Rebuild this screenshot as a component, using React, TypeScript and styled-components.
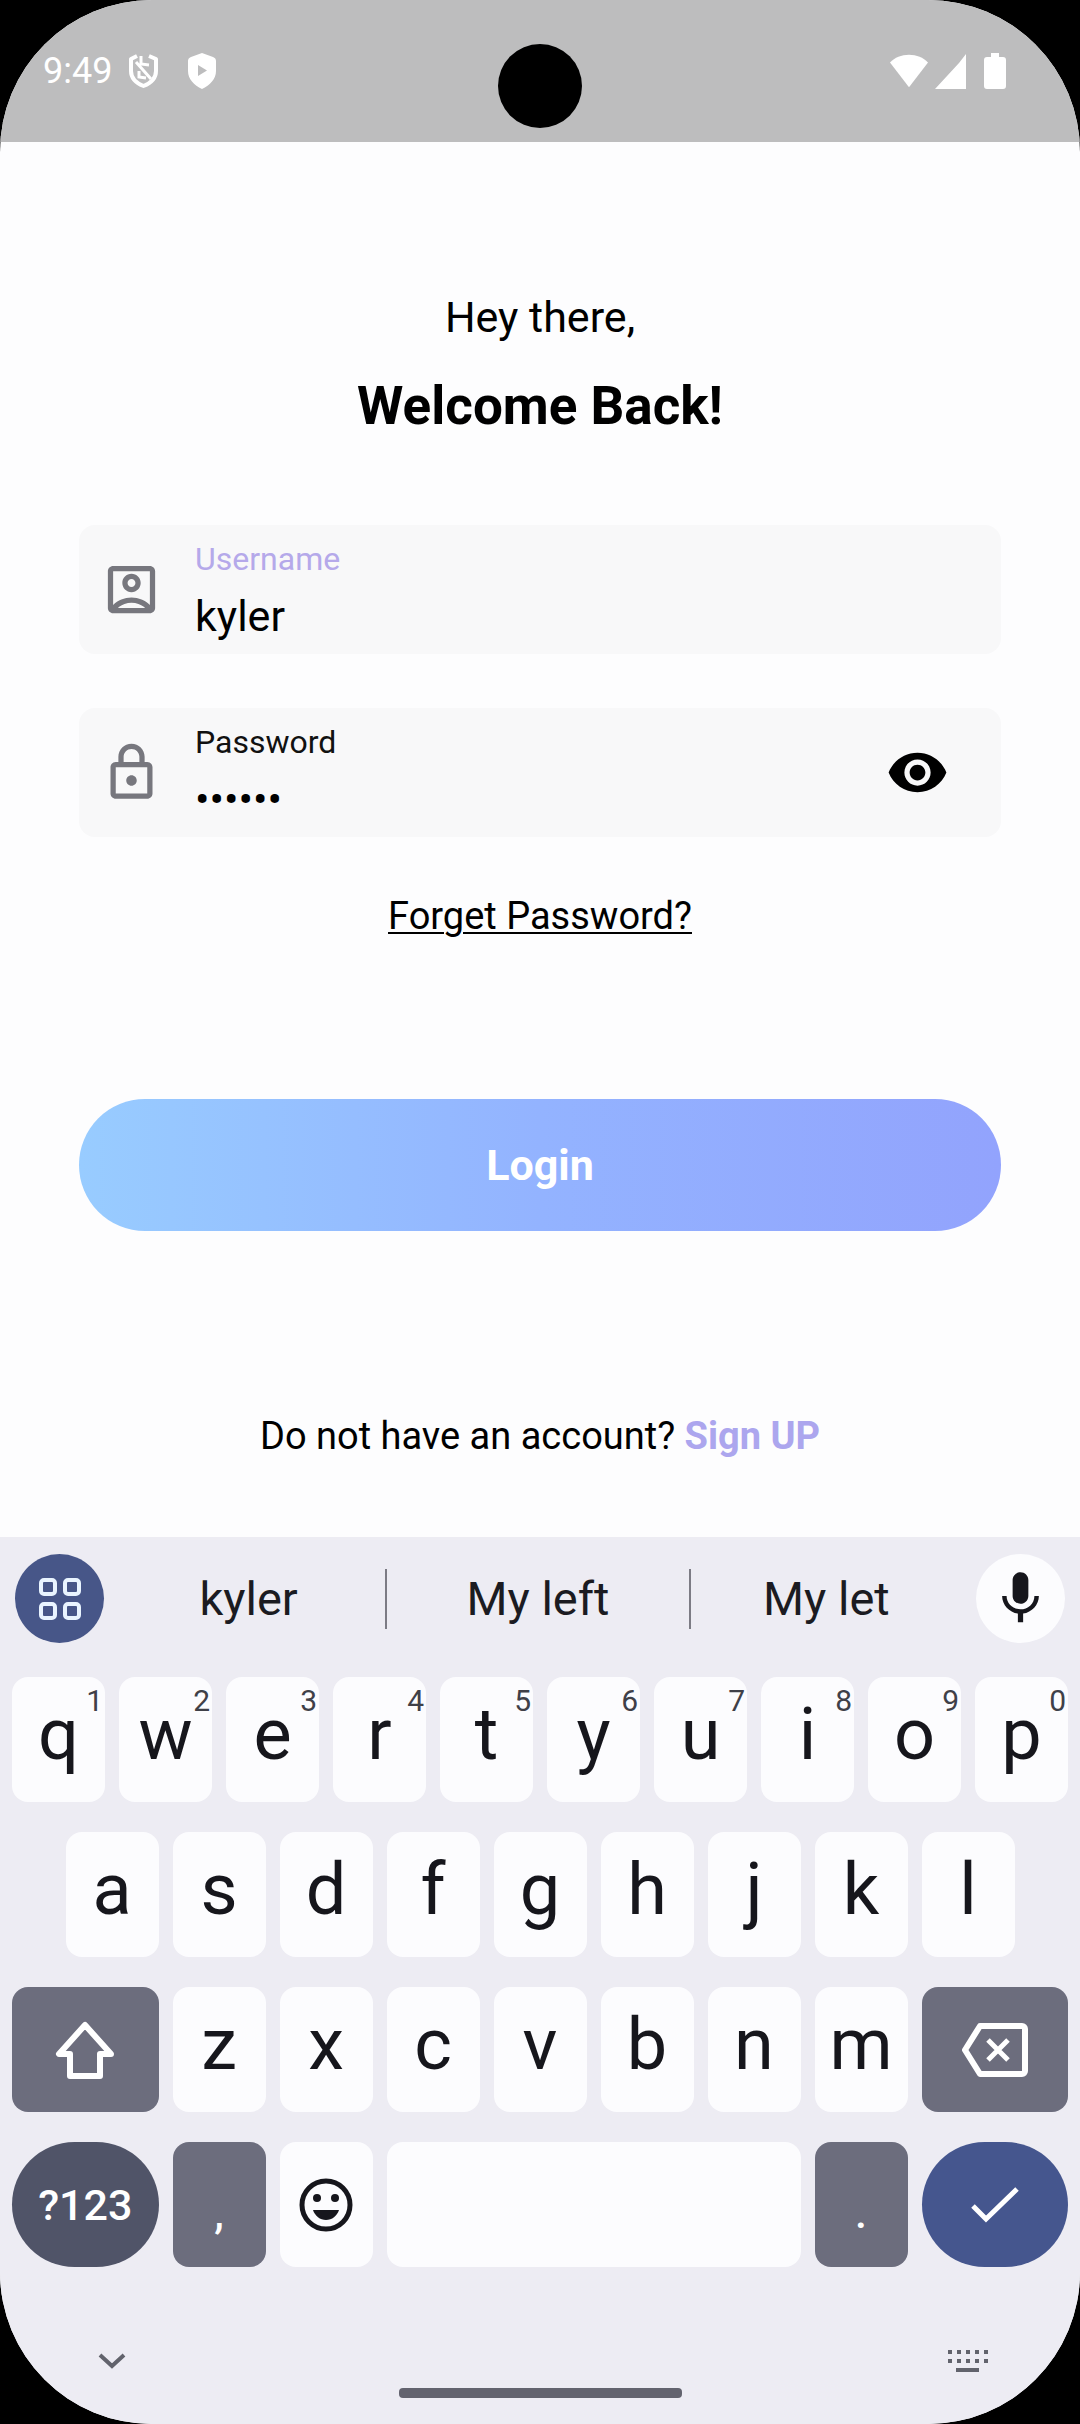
import React, { useState } from "react";
import styled, { createGlobalStyle, css } from "styled-components";
import { MdMic, MdOutlineAccountBox, MdOutlineLock, MdVisibility } from "react-icons/md";

const GlobalStyle = createGlobalStyle`
  *, *::before, *::after { box-sizing: border-box; }
  body {
    margin: 0;
    background: #000;
    font-family: Roboto, "Liberation Sans", sans-serif;
  }
  button, input { font-family: inherit; }
  button { border: 0; padding: 0; cursor: pointer; }
  svg { display: block; flex: none; }
`;

const Screen = styled.div`
  position: relative;
  display: flex;
  flex-direction: column;
  min-height: 100vh;
  border-radius: 152px;
  overflow: hidden;
  background: #fdfdfe;
  color: #000;
`;

const StatusBar = styled.header`
  display: flex;
  align-items: center;
  justify-content: space-between;
  height: 142px;
  padding: 0 74px 0 43px;
  background: #bdbdbe;
  color: #fff;
`;

const StatusGroup = styled.div<{ $gap: number }>`
  display: flex;
  align-items: center;
  gap: ${(p) => p.$gap}px;
`;

const Clock = styled.time`
  font-size: 36px;
  line-height: 44px;
  margin-right: -12px;
`;

const Camera = styled.div`
  position: absolute;
  top: 44px;
  left: 50%;
  width: 84px;
  height: 84px;
  margin-left: -42px;
  border-radius: 50%;
  background: #000;
`;

const Main = styled.main`
  display: flex;
  flex-direction: column;
  align-items: center;
  padding: 150px 79px 79px;
`;

const Greeting = styled.p`
  margin: 0 0 32px;
  font-size: 43px;
  line-height: 50px;
`;

const Title = styled.h1`
  margin: 0;
  font-size: 53px;
  line-height: 64px;
  font-weight: 700;
`;

const Form = styled.form`
  display: flex;
  flex-direction: column;
  align-items: center;
  align-self: stretch;
  margin-top: 87px;
`;

const Fields = styled.div`
  display: flex;
  flex-direction: column;
  align-self: stretch;
  gap: 54px;
`;

const Field = styled.div`
  display: flex;
  align-items: center;
  gap: 32px;
  height: 129px;
  padding: 0 52px 0 21px;
  border-radius: 16px;
  background: #f8f8f9;
  color: #77777e;
`;

const FieldText = styled.div`
  display: flex;
  flex: 1;
  flex-direction: column;
  gap: 14px;
  min-width: 0;
  padding-top: 2px;
`;

const Label = styled.label<{ $active?: boolean }>`
  font-size: 32px;
  line-height: 36px;
  color: ${(p) => (p.$active ? "#b5a9ea" : "#111")};
`;

const Input = styled.input`
  width: 100%;
  height: 50px;
  padding: 0;
  border: 0;
  outline: 0;
  background: transparent;
  font-size: 43px;
  line-height: 50px;
  color: #000;
`;

const EyeButton = styled.button`
  background: transparent;
  color: #000;
`;

const ForgotLink = styled.a`
  margin: 57px 0 161px;
  font-size: 38px;
  line-height: 44px;
  color: #000;
  text-decoration: underline;
  text-decoration-thickness: 2px;
  text-underline-offset: 3px;
`;

const LoginButton = styled.button`
  align-self: stretch;
  height: 132px;
  border-radius: 66px;
  background: linear-gradient(90deg, #98ccff, #93b3ff 50%, #92a3fd);
  color: #fff;
  font-size: 43px;
  line-height: 50px;
  font-weight: 700;
`;

const SignUp = styled.p`
  margin: 183px 0 0;
  font-size: 38px;
  line-height: 44px;
`;

const SignUpLink = styled.a`
  font-weight: 700;
  color: #aca6ee;
  text-decoration: none;
`;

const Keyboard = styled.section`
  margin-top: auto;
  padding: 17px 12px 26px;
  background: #edecf3;
`;

const Strip = styled.div`
  display: flex;
  align-items: center;
  gap: 8px;
  padding: 0 3px;
  margin-bottom: 34px;
`;

const RoundButton = styled.button<{ $dark?: boolean }>`
  display: flex;
  flex: none;
  align-items: center;
  justify-content: center;
  width: 89px;
  height: 89px;
  border-radius: 50%;
  background: ${(p) => (p.$dark ? "#475688" : "#fcfcfe")};
  color: ${(p) => (p.$dark ? "#e9f4ff" : "#16161c")};
`;

const Suggestions = styled.div`
  display: grid;
  flex: 1;
  grid-template-columns: 9fr 10fr 9fr;
  padding-right: 6px;
`;

const Suggestion = styled.button`
  height: 60px;
  background: transparent;
  color: #1b1b21;
  font-size: 47px;
  line-height: 60px;

  & + & { border-left: 2px solid #7c7b84; }
`;

const Keys = styled.div`
  display: grid;
  grid-template-columns: repeat(20, minmax(0, 1fr));
  grid-auto-rows: 125px;
  gap: 30px 14px;
`;

type Tone = "light" | "grey" | "slate" | "blue";

const tones: Record<Tone, string> = {
  light: "#fcfcfe",
  grey: "#6c6d7d",
  slate: "#505468",
  blue: "#45568e",
};

const Key = styled.button<{ $span?: number; $start?: number; $tone?: Tone; $pill?: boolean }>`
  position: relative;
  display: flex;
  align-items: center;
  justify-content: center;
  grid-column: ${(p) => p.$start ?? "auto"} / span ${(p) => p.$span ?? 2};
  border-radius: ${(p) => (p.$pill ? 63 : 16)}px;
  background: ${(p) => tones[p.$tone ?? "light"]};
  color: ${(p) => (p.$tone && p.$tone !== "light" ? "#fff" : "#16161c")};
`;

const LetterKey = styled(Key)`
  padding-bottom: 10px;
  font-size: 72px;
  line-height: 84px;
`;

const Hint = styled.span`
  position: absolute;
  top: 6px;
  right: 2px;
  font-size: 30px;
  line-height: 36px;
  color: #3f4048;
`;

const SymbolKey = styled(Key)<{ $low?: boolean }>`
  font-size: 43px;
  line-height: 52px;
  font-weight: 500;
  ${(p) => p.$low && css`padding-top: 16px;`}
`;

const NavRow = styled.div`
  display: flex;
  justify-content: space-between;
  height: 62px;
  margin-top: 69px;
  padding: 0 75px;
`;

const NavButton = styled.button`
  display: flex;
  align-items: center;
  justify-content: center;
  width: 50px;
  height: 50px;
  background: transparent;
  color: #62636c;
`;

const HomeBar = styled.div`
  align-self: flex-end;
  width: 283px;
  height: 10px;
  border-radius: 4px;
  background: #63636e;
`;

const ShieldOffIcon = () => (
  <svg width="31" height="36" viewBox="0 0 31 36" fill="none" stroke="currentColor" strokeWidth="4">
    <path d="M9 3 3 6v12c0 7 5 12 12.500 15C23 30 28 25 28 18V6l-7-3" strokeLinejoin="round" />
    <path d="m8 9 15 17M13 3v8l8 1M11 18v6l7 1" strokeWidth="3" />
  </svg>
);

const ShieldPlayIcon = () => (
  <svg width="30" height="36" viewBox="0 0 30 36">
    <path
      fill="currentColor"
      fillRule="evenodd"
      d="M15 0 4 4Q1 5 1 8v10c0 8 6 14 14 18 8-4 14-10 14-18V8q0-3-3-4L15 0Zm-4 12 9 5.500L11 23Z"
    />
  </svg>
);

const WifiIcon = () => (
  <svg width="38" height="36" viewBox="0 0 40 36" fill="currentColor">
    <path d="M20 1C12 1 5 4 0 9l20 26L40 9C35 4 28 1 20 1Z" />
  </svg>
);

const SignalIcon = () => (
  <svg width="31" height="35" viewBox="0 0 31 35" fill="currentColor">
    <path d="M31 0v35H0L24 9Z" />
  </svg>
);

const BatteryIcon = () => (
  <svg width="22" height="36" viewBox="0 0 22 36" fill="currentColor">
    <path d="M7 0h8v4h4a3 3 0 0 1 3 3v26a3 3 0 0 1-3 3H3a3 3 0 0 1-3-3V7a3 3 0 0 1 3-3h4Z" />
  </svg>
);

const GridIcon = () => (
  <svg width="42" height="42" viewBox="0 0 42 42" fill="none" stroke="currentColor" strokeWidth="4">
    <rect x="2" y="2" width="14" height="14" rx="3" />
    <rect x="26" y="2" width="14" height="14" rx="3" />
    <rect x="2" y="26" width="14" height="14" rx="3" />
    <rect x="26" y="26" width="14" height="14" rx="3" />
  </svg>
);

const ShiftIcon = () => (
  <svg width="60" height="60" viewBox="0 0 60 60" fill="none" stroke="currentColor" strokeWidth="6" strokeLinejoin="round">
    <path d="M30 5 4 34h11v22h30V34h11Z" />
  </svg>
);

const BackspaceIcon = () => (
  <svg width="66" height="54" viewBox="0 0 66 54" fill="none" stroke="currentColor" strokeWidth="6" strokeLinejoin="round">
    <path d="M18 3h42a3 3 0 0 1 3 3v42a3 3 0 0 1-3 3H18L3 27Z" />
    <path d="m26 17 20 20M46 17 26 37" strokeWidth="5" />
  </svg>
);

const SmileIcon = () => (
  <svg width="54" height="54" viewBox="0 0 54 54" fill="currentColor">
    <circle cx="27" cy="27" r="24" fill="none" stroke="currentColor" strokeWidth="5" />
    <circle cx="18" cy="20" r="4" />
    <circle cx="36" cy="20" r="4" />
    <path d="M14 32h26c-2 6-7 10-13 10s-11-4-13-10Z" />
  </svg>
);

const CheckIcon = () => (
  <svg width="48" height="36" viewBox="0 0 48 36" fill="none" stroke="currentColor" strokeWidth="5">
    <path d="m2 19 13 13L46 2" />
  </svg>
);

const ChevronIcon = () => (
  <svg width="28" height="16" viewBox="0 0 28 16" fill="none" stroke="currentColor" strokeWidth="4">
    <path d="m2 2 12 11L26 2" />
  </svg>
);

const KeyboardIcon = () => (
  <svg width="42" height="24" viewBox="0 0 42 24" fill="currentColor">
    {[1, 10, 19, 28, 37].map((x) => (
      <React.Fragment key={x}>
        <rect x={x} y="1" width="4" height="4" />
        <rect x={x} y="10" width="4" height="4" />
      </React.Fragment>
    ))}
    <rect x="9" y="19" width="23" height="4" />
  </svg>
);

const topRow = "qwertyuiop".split("");
const homeRow = "asdfghjkl".split("");
const bottomRow = "zxcvbnm".split("");

export default function App() {
  const [username, setUsername] = useState("kyler");
  const [password, setPassword] = useState("secret");
  const [visible, setVisible] = useState(false);

  return (
    <>
      <GlobalStyle />
      <Screen>
        <StatusBar>
          <StatusGroup $gap={28}>
            <Clock>9:49</Clock>
            <ShieldOffIcon />
            <ShieldPlayIcon />
          </StatusGroup>
          <StatusGroup $gap={18}>
            <StatusGroup $gap={7}>
              <WifiIcon />
              <SignalIcon />
            </StatusGroup>
            <BatteryIcon />
          </StatusGroup>
        </StatusBar>
        <Camera />

        <Main>
          <Greeting>Hey there,</Greeting>
          <Title>Welcome Back!</Title>
          <Form onSubmit={(e) => e.preventDefault()}>
            <Fields>
              <Field>
                <MdOutlineAccountBox size={63} />
                <FieldText>
                  <Label htmlFor="username" $active>Username</Label>
                  <Input id="username" value={username} onChange={(e) => setUsername(e.target.value)} />
                </FieldText>
              </Field>
              <Field>
                <MdOutlineLock size={63} />
                <FieldText>
                  <Label htmlFor="password">Password</Label>
                  <Input
                    id="password"
                    type={visible ? "text" : "password"}
                    value={password}
                    onChange={(e) => setPassword(e.target.value)}
                  />
                </FieldText>
                <EyeButton type="button" aria-label="Show password" onClick={() => setVisible(!visible)}>
                  <MdVisibility size={63} />
                </EyeButton>
              </Field>
            </Fields>
            <ForgotLink href="#forgot">Forget Password?</ForgotLink>
            <LoginButton type="submit">Login</LoginButton>
          </Form>
          <SignUp>
            Do not have an account? <SignUpLink href="#signup">Sign UP</SignUpLink>
          </SignUp>
        </Main>

        <Keyboard>
          <Strip>
            <RoundButton $dark aria-label="Keyboard tools"><GridIcon /></RoundButton>
            <Suggestions>
              <Suggestion>kyler</Suggestion>
              <Suggestion>My left</Suggestion>
              <Suggestion>My let</Suggestion>
            </Suggestions>
            <RoundButton aria-label="Voice input"><MdMic size={63} /></RoundButton>
          </Strip>
          <Keys>
            {topRow.map((letter, i) => (
              <LetterKey key={letter}>
                {letter}
                <Hint>{(i + 1) % 10}</Hint>
              </LetterKey>
            ))}
            {homeRow.map((letter, i) => (
              <LetterKey key={letter} $start={i === 0 ? 2 : undefined}>{letter}</LetterKey>
            ))}
            <Key $span={3} $start={1} $tone="grey" aria-label="Shift"><ShiftIcon /></Key>
            {bottomRow.map((letter) => (
              <LetterKey key={letter}>{letter}</LetterKey>
            ))}
            <Key $span={3} $tone="grey" aria-label="Backspace"><BackspaceIcon /></Key>
            <SymbolKey $span={3} $tone="slate" $pill>?123</SymbolKey>
            <SymbolKey $tone="grey" $low>,</SymbolKey>
            <Key aria-label="Emoji"><SmileIcon /></Key>
            <Key $span={8} aria-label="Space" />
            <SymbolKey $tone="grey" $low>.</SymbolKey>
            <Key $span={3} $tone="blue" $pill aria-label="Done"><CheckIcon /></Key>
          </Keys>
          <NavRow>
            <NavButton aria-label="Hide keyboard"><ChevronIcon /></NavButton>
            <HomeBar />
            <NavButton aria-label="Switch keyboard"><KeyboardIcon /></NavButton>
          </NavRow>
        </Keyboard>
      </Screen>
    </>
  );
}
